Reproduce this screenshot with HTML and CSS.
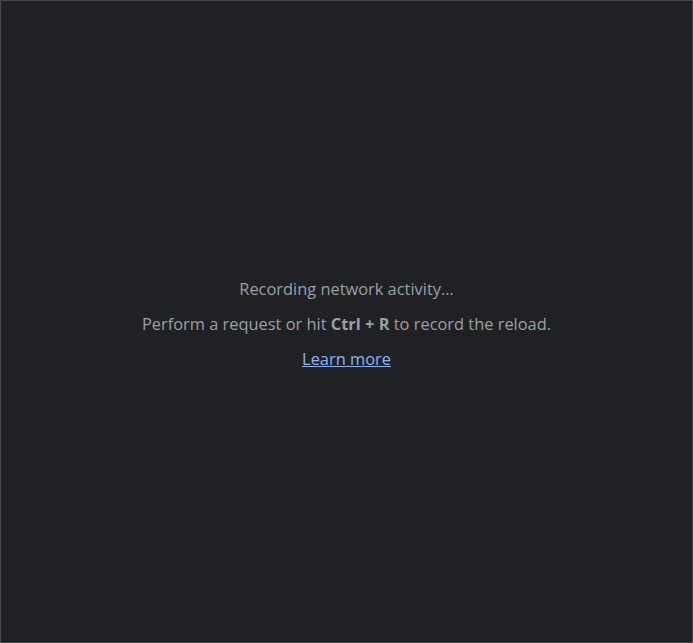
FILE: index.html
```html
<!DOCTYPE html>
<html>
<head><meta charset="utf-8"><link rel="stylesheet" href="styles.css"></head>
<body>
<div class="panel">
  <div class="empty">
    <div class="line">Recording network activity…</div>
    <div class="line">Perform a request or hit <b class="key">Ctrl + R</b> to record the reload.</div>
    <div class="line"><a class="link" href="#">Learn more</a></div>
  </div>
</div>
</body>
</html>
```
FILE: styles.css
```css
html,body{margin:0;height:100%}
body{background:#202124;font-family:"Open Sans",sans-serif}
.panel{box-sizing:border-box;height:100%;border:1px solid #45484c;display:flex;align-items:center;justify-content:center;padding-top:5px}
.empty{display:flex;flex-direction:column;align-items:center;gap:15px;color:#9aa0a6;font-size:16.4px;line-height:20px;text-align:center}
.line{white-space:nowrap}
.key{font-weight:700;color:#9aa0a6}
.link{color:#8ab4f8;text-decoration:underline}
```
